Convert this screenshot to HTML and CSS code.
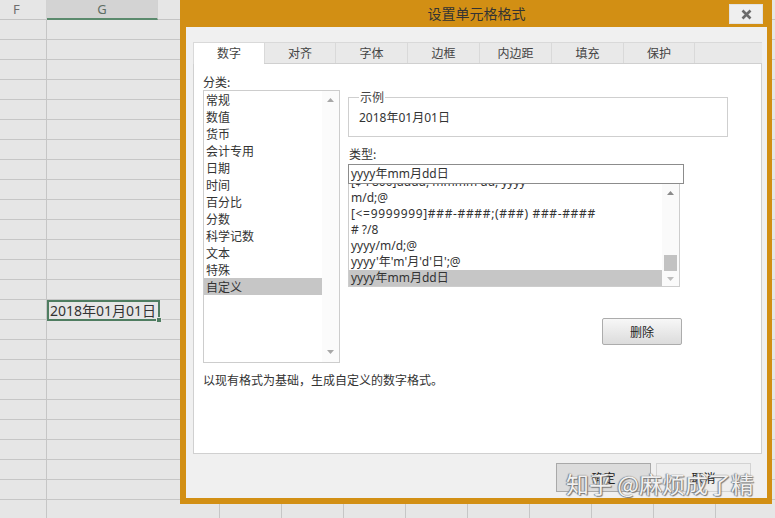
FILE: index.html
```html
<!DOCTYPE html>
<html lang="zh-CN">
<head>
<meta charset="utf-8">
<title>设置单元格格式</title>
<link rel="stylesheet" href="styles.css">
</head>
<body>
<div class="sheet">
  <div class="col-head">
    <div class="ch ch-f">F</div>
    <div class="ch ch-g">G</div>
    <div class="ch"></div><div class="ch"></div><div class="ch"></div><div class="ch"></div><div class="ch"></div>
    <div class="ch"></div><div class="ch"></div><div class="ch"></div><div class="ch"></div><div class="ch"></div>
  </div>
  <div class="grid">
    <div class="col"></div><div class="col"></div><div class="col"></div><div class="col"></div>
    <div class="col"></div><div class="col"></div><div class="col"></div><div class="col"></div>
    <div class="col"></div><div class="col"></div><div class="col"></div><div class="col"></div>
    <div class="cell-sel">2018年01月01日<span class="handle"></span></div>
  </div>
</div>

<div class="dialog">
  <div class="titlebar">
    <div class="title">设置单元格格式</div>
    <button class="close" aria-label="关闭">
      <svg width="11" height="11" viewBox="0 0 11 11"><path d="M1.5 1.5 L9.5 9.5 M9.5 1.5 L1.5 9.5" stroke="#6b6b6b" stroke-width="2.6" stroke-linecap="butt"/></svg>
    </button>
  </div>
  <div class="dbody">
    <div class="tabs">
      <div class="tab active narrow">数字</div>
      <div class="tab narrow">对齐</div>
      <div class="tab">字体</div>
      <div class="tab">边框</div>
      <div class="tab">内边距</div>
      <div class="tab">填充</div>
      <div class="tab last">保护</div>
      <div class="tab-fill"></div>
    </div>
    <div class="panel">
      <div class="panel-main">
        <div class="left">
          <div class="lbl">分类:</div>
          <div class="catlist">
            <div class="items">
              <div class="item">常规</div>
              <div class="item">数值</div>
              <div class="item">货币</div>
              <div class="item">会计专用</div>
              <div class="item">日期</div>
              <div class="item">时间</div>
              <div class="item">百分比</div>
              <div class="item">分数</div>
              <div class="item">科学记数</div>
              <div class="item">文本</div>
              <div class="item">特殊</div>
              <div class="item selected">自定义</div>
            </div>
            <div class="vscroll cat-scroll">
              <svg class="arr" width="7" height="4" viewBox="0 0 7 4"><polygon points="0,4 3.5,0 7,4" fill="#a8a8a8"/></svg>
              <svg class="arr" width="7" height="4" viewBox="0 0 7 4"><polygon points="0,0 7,0 3.5,4" fill="#a8a8a8"/></svg>
            </div>
          </div>
        </div>
        <div class="right">
          <fieldset class="sample">
            <legend>示例</legend>
            <div class="sample-val">2018年01月01日</div>
          </fieldset>
          <div class="lbl type-lbl">类型:</div>
          <div class="type-input">yyyy年mm月dd日</div>
          <div class="typelist">
            <div class="items type-items">
              <div class="item">[$-F800]dddd, mmmm dd, yyyy</div>
              <div class="item">m/d;@</div>
              <div class="item wide">[&lt;=9999999]###-####;(###) ###-####</div>
              <div class="item"># ?/8</div>
              <div class="item">yyyy/m/d;@</div>
              <div class="item">yyyy'年'm'月'd'日';@</div>
              <div class="item selected">yyyy年mm月dd日</div>
            </div>
            <div class="vscroll type-scroll">
              <svg class="arr" width="7" height="4" viewBox="0 0 7 4"><polygon points="0,4 3.5,0 7,4" fill="#8a8a8a"/></svg>
              <div class="track"><div class="thumb"></div></div>
              <svg class="arr" width="7" height="4" viewBox="0 0 7 4"><polygon points="0,0 7,0 3.5,4" fill="#bdbdbd"/></svg>
            </div>
          </div>
          <div class="del-row"><button class="btn del">删除</button></div>
        </div>
      </div>
      <div class="desc">以现有格式为基础，生成自定义的数字格式。</div>
    </div>
    <div class="footer">
      <button class="btn ok">确定</button>
      <button class="btn cancel">取消</button>
    </div>
  </div>
</div>

<div class="watermark">知乎 @麻烦成了精</div>
</body>
</html>
```

FILE: styles.css
```css
* { box-sizing: border-box; }
html, body { margin: 0; padding: 0; }
body {
  width: 775px;
  height: 518px;
  overflow: hidden;
  position: relative;
  background: #e6e6e6;
  font-family: "Noto Sans", "Noto Sans CJK SC", sans-serif;
  font-size: 12px;
  color: #333;
}

/* spreadsheet */
.sheet { width: 775px; }
.col-head { display: flex; height: 20px; }
.ch {
  flex: none;
  width: 62px;
  height: 20px;
  border-right: 1px solid #d2d2d2;
  border-bottom: 1px solid #c4c4c4;
  color: #6e6e6e;
  font-size: 13px;
  line-height: 19px;
  text-align: center;
}
.ch-f { width: 47px; text-align: left; padding-left: 13px; }
.ch-g { width: 111px; background: #d3d3d3; border-bottom: 2px solid #5b8a6d; color: #5e6e64; line-height: 18px; }
.grid {
  display: grid;
  grid-template-columns: 47px 111px repeat(10, 62px);
  grid-template-rows: repeat(25, 20px);
  background: repeating-linear-gradient(to bottom, transparent 0 19px, #c6c6c6 19px 20px);
}
.col { grid-row: 1 / -1; border-right: 1px solid #c6c6c6; }
.cell-sel {
  grid-row: 15;
  grid-column: 2;
  position: relative;
  margin: 0 -2px -1px 0;
  border: 2px solid #4f7d61;
  font-size: 14px;
  line-height: 17px;
  color: #333;
  text-align: right;
  padding-right: 2px;
  white-space: nowrap;
}
.handle {
  position: absolute;
  right: -4px;
  bottom: -4px;
  width: 6px;
  height: 6px;
  background: #4f7d61;
  border: 1px solid #e6e6e6;
}

/* dialog window */
.dialog {
  position: absolute;
  left: 180px;
  top: 0;
  width: 592px;
  height: 504px;
  background: #d28f14;
  padding: 0 5px 6px 6px;
  display: flex;
  flex-direction: column;
}
.titlebar {
  height: 27px;
  flex: none;
  display: grid;
  grid-template-columns: 1fr auto 1fr;
}
.title {
  grid-column: 2;
  font-family: "Noto Sans CJK SC", sans-serif;
  font-size: 14px;
  line-height: 27px;
  color: #333;
}
.close {
  grid-column: 3;
  justify-self: end;
  align-self: start;
  margin: 4px 4px 0 0;
  width: 34px;
  height: 20px;
  padding: 0;
  border: 1px solid #e2e2e2;
  background: #efefef;
  display: flex;
  align-items: center;
  justify-content: center;
}
.dbody {
  flex: 1;
  background: #f0f0f0;
  padding: 15px 5px 0 7px;
  display: flex;
  flex-direction: column;
}

/* tabs */
.tabs { display: flex; height: 21px; flex: none; position: relative; z-index: 1; }
.tab {
  flex: none;
  width: 72px;
  height: 21px;
  background: #e9e9e9;
  border-top: 1px solid #d9d9d9;
  border-left: 1px solid #d9d9d9;
  text-align: center;
  font-family: "Noto Sans CJK SC", sans-serif;
  font-size: 12px;
  line-height: 20px;
  color: #444;
}
.tab.narrow { width: 71px; }
.tab.last { border-right: 1px solid #d9d9d9; }
.tab.active { background: #fff; height: 22px; }
.tab-fill {
  flex: 1;
  height: 21px;
  background: #e9e9e9;
  border-top: 1px solid #d9d9d9;
}

/* panel */
.panel {
  flex: none;
  height: 391px;
  background: #fff;
  border: 1px solid #d0d0d0;
  padding: 10px 10px 0 9px;
}
.panel-main { display: flex; gap: 8px; }
.left { width: 137px; flex: none; }
.right { width: 380px; flex: none; display: flex; flex-direction: column; align-items: flex-start; }
.lbl { line-height: 16px; color: #333; font-family: "Noto Sans CJK SC", sans-serif; }
.items { flex: 1; min-width: 0; }
.item { white-space: nowrap; padding-left: 2px; color: #333; }
.item.selected { background: #c6c6c6; }
.item.wide { letter-spacing: 0.65px; }

.catlist {
  display: flex;
  height: 273px;
  border: 1px solid #cdcdcd;
}
.catlist .item { line-height: 17px; font-family: "Noto Sans CJK SC", sans-serif; }
.vscroll { width: 17px; flex: none; display: flex; flex-direction: column; align-items: center; }
.cat-scroll { justify-content: space-between; padding: 7px 0 8px; background: #fbfbfb; }

.sample {
  width: 380px;
  margin: 15px 0 0 0;
  padding: 5px 10px 10px 10px;
  border: 1px solid #cfcfcf;
  min-width: 0;
}
.sample legend { padding: 0 1px; line-height: 16px; color: #444; font-family: "Noto Sans CJK SC", sans-serif; }
.sample-val { line-height: 16px; }
.type-lbl { margin-top: 9px; padding-left: 1px; }
.type-input {
  margin-top: 2px;
  width: 336px;
  height: 20px;
  border: 1px solid #8c8c8c;
  background: #fff;
  padding-left: 2px;
  line-height: 18px;
  white-space: nowrap;
}
.typelist {
  display: flex;
  width: 332px;
  height: 103px;
  border: 1px solid #cdcdcd;
  border-top: none;
  overflow: hidden;
}
.type-items { margin-top: -10px; }
.type-items .item { line-height: 16px; height: 16px; }
.type-scroll { padding: 7px 0 5px; background: #fafafa; }
.track { flex: 1; width: 13px; display: flex; flex-direction: column; justify-content: flex-end; padding-bottom: 6px; }
.thumb { height: 16px; background: #c2c2c2; }

.btn {
  font-family: "Noto Sans CJK SC", sans-serif;
  font-size: 12px;
  color: #222;
  padding: 0;
}
.del-row { margin-top: 31px; padding-left: 254px; }
.del {
  width: 80px;
  height: 27px;
  border: 1px solid #acacac;
  border-radius: 2px;
  background: linear-gradient(#f7f7f7, #dcdcdc);
}
.desc { margin-top: 9px; line-height: 16px; font-family: "Noto Sans CJK SC", sans-serif; }

.footer {
  display: flex;
  justify-content: flex-end;
  gap: 5px;
  margin-top: 9px;
  padding-right: 11px;
}
.ok, .cancel { width: 95px; height: 29px; }
.ok { background: #dcdcdc; border: 1px solid #a9a9a9; }
.cancel { background: #eeeeee; border: 1px solid #d3d3d3; }

.watermark {
  position: absolute;
  left: 566px;
  top: 468px;
  font-family: "Noto Sans CJK SC", sans-serif;
  font-size: 23px;
  line-height: 30px;
  color: rgba(255, 255, 255, 0.92);
  text-shadow: 0 0 1px #6a6a6a, 1px 1px 1px #7a7a7a, -1px 0 1px #8a8a8a;
  white-space: nowrap;
}
```
